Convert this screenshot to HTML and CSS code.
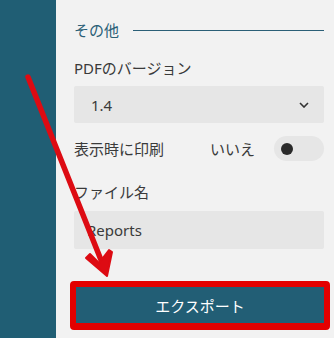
FILE: index.html
```html
<!DOCTYPE html>
<html lang="ja">
<head>
<meta charset="utf-8">
<link rel="stylesheet" href="styles.css">
</head>
<body>
<div class="app">
  <aside class="sidebar"></aside>
  <main class="panel">
    <div class="section-head">
      <span class="section-title">その他</span>
      <span class="section-rule"></span>
    </div>
    <div class="label label-first">PDFのバージョン</div>
    <div class="select">
      <span class="select-value">1.4</span>
      <svg class="chevron" width="10" height="6" viewBox="0 0 10 6"><path d="M1 1 L5 5 L9 1" fill="none" stroke="#333" stroke-width="1.6"/></svg>
    </div>
    <div class="toggle-row">
      <span class="toggle-label">表示時に印刷</span>
      <span class="toggle-group">
        <span class="toggle-text">いいえ</span>
        <span class="toggle"><span class="knob"></span></span>
      </span>
    </div>
    <div class="label label-file">ファイル名</div>
    <div class="input">Reports</div>
    <div class="highlight">
      <button class="export">エクスポート</button>
    </div>
  </main>
</div>
<svg class="arrow" width="334" height="338" viewBox="0 0 334 338">
  <line x1="28" y1="77" x2="105" y2="270" stroke="#dd0b13" stroke-width="5.5" stroke-linecap="round"/>
  <polygon points="86,258 90,254 99,263 109,250 112,252 107,276" fill="#dd0b13" stroke="#dd0b13" stroke-width="2" stroke-linejoin="round"/>
</svg>
</body>
</html>
```

FILE: styles.css
```css
html, body {
  margin: 0;
  padding: 0;
}
body {
  width: 334px;
  height: 338px;
  overflow: hidden;
  background: #f2f2f2;
  font-family: "Noto Sans", "Noto Sans CJK JP", sans-serif;
  font-size: 15px;
  color: #3a3a3a;
  position: relative;
}
.app {
  display: flex;
  height: 338px;
}
.sidebar {
  width: 56px;
  flex: none;
  background: #205e74;
}
.panel {
  flex: 1;
  padding: 20px 10px 0 18px;
  display: flex;
  flex-direction: column;
}
.section-head {
  display: flex;
  align-items: center;
  height: 20px;
}
.section-title {
  color: #2b5f77;
  line-height: 20px;
}
.section-rule {
  flex: 1;
  height: 1px;
  background: #2b5f77;
  margin-left: 14px;
  margin-top: 1px;
}
.label {
  height: 20px;
  line-height: 20px;
}
.label-first {
  margin-top: 18px;
}
.select {
  margin-top: 8px;
  height: 37px;
  background: #e6e6e6;
  border-radius: 2px;
  display: flex;
  align-items: center;
  justify-content: space-between;
  padding: 0 15px 0 17px;
}
.chevron {
  display: block;
}
.toggle-row {
  margin-top: 13px;
  height: 25px;
  display: flex;
  align-items: center;
  justify-content: space-between;
}
.toggle-group {
  display: flex;
  align-items: center;
  gap: 19px;
}
.toggle {
  width: 50px;
  height: 25px;
  border-radius: 13px;
  background: #e6e6e6;
  display: flex;
  align-items: center;
  padding-left: 7px;
  box-sizing: border-box;
}
.knob {
  width: 12px;
  height: 12px;
  border-radius: 50%;
  background: #2a2a2a;
}
.label-file {
  margin-top: 21px;
}
.input {
  margin-top: 9px;
  height: 38px;
  line-height: 38px;
  background: #e6e6e6;
  border-radius: 2px;
  padding-left: 13px;
}
.highlight {
  margin: 32px -6px 0 -4px;
  border: 6px solid #e30000;
  border-bottom-width: 7px;
  border-radius: 4px;
  display: flex;
}
.export {
  flex: 1;
  height: 36px;
  border: 0;
  background: #225e75;
  color: #fff;
  font-family: "Noto Sans", "Noto Sans CJK JP", sans-serif;
  font-size: 15px;
  padding: 0;
}
.arrow {
  position: absolute;
  left: 0;
  top: 0;
  pointer-events: none;
}
```
